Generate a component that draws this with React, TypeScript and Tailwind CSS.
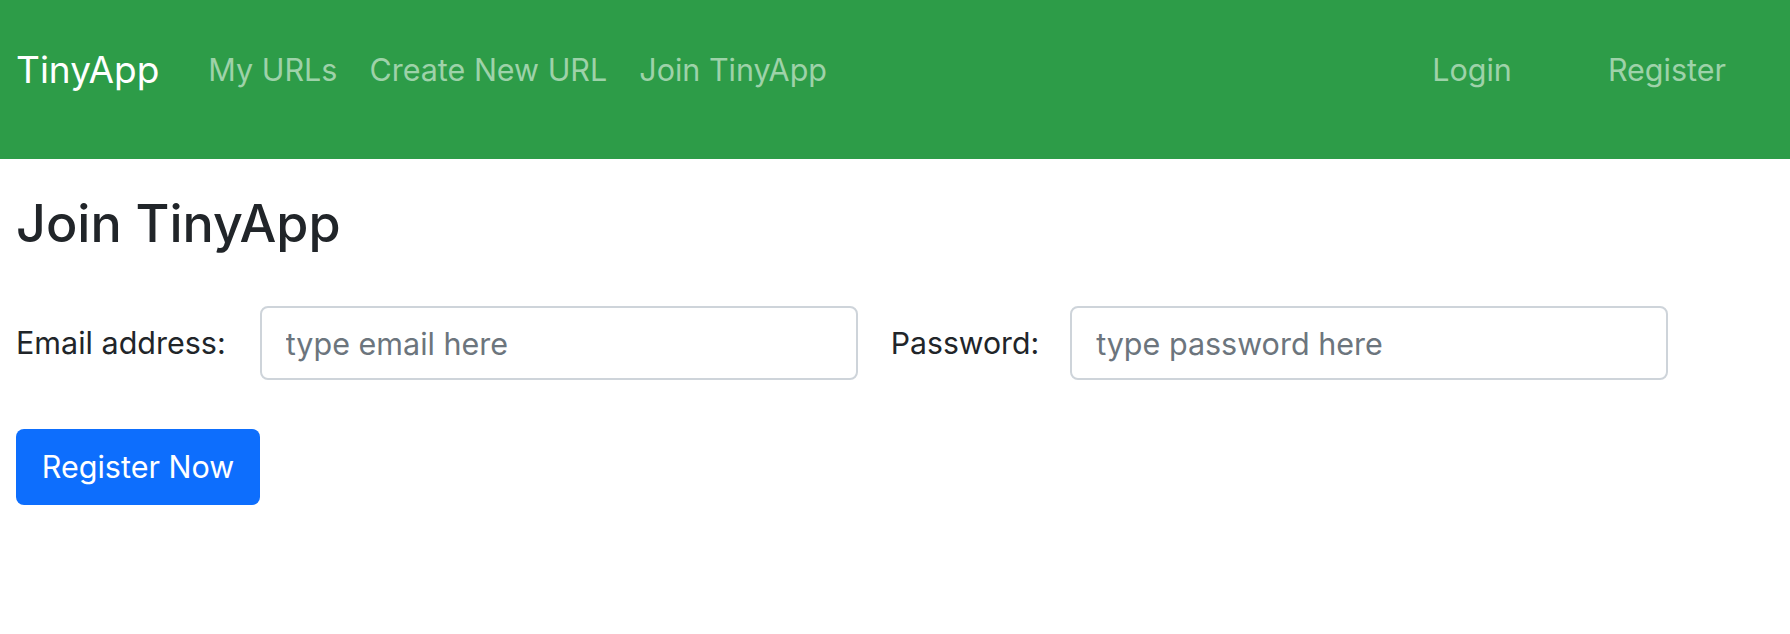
import React from 'react';

const navLinks = ['My URLs', 'Create New URL', 'Join TinyApp'];

export default function App() {
  return (
    <div className="min-h-screen bg-white text-[#212529] font-['Inter','Liberation_Sans',sans-serif]">
      {/* Navbar */}
      <nav className="h-[159px] bg-[#2d9c48] flex items-start pt-[46px] px-4">
        <a className="text-white text-[37px] leading-[48px] mr-[33px]">TinyApp</a>
        <div className="flex">
          {navLinks.map(link => (
            <a key={link} className="px-4 text-[30.5px] leading-[48px] text-[#9ed2a9]">
              {link}
            </a>
          ))}
        </div>
        <div className="ml-auto flex">
          <a className="px-12 text-[30.5px] leading-[48px] text-[#9ed2a9]">Login</a>
          <a className="px-12 text-[30.5px] leading-[48px] text-[#9ed2a9]">Register</a>
        </div>
      </nav>

      {/* Register form */}
      <main className="px-4">
        <h2 className="mt-[31px] text-[52px] leading-[68px] font-medium">Join TinyApp</h2>
        <form className="mt-[48px]">
          <div className="flex items-center">
            <label className="text-[30.5px] leading-[48px]">Email address:</label>
            <input
              type="email"
              placeholder="type email here"
              className="ml-[34px] w-[598px] h-[74px] px-[24px] text-[30.5px] border-2 border-[#ced4da] rounded-[8px] placeholder:text-[#6c757d] outline-none"
            />
            <label className="ml-[33px] text-[30.2px] leading-[48px]">Password:</label>
            <input
              type="password"
              placeholder="type password here"
              className="ml-[31px] w-[598px] h-[74px] px-[24px] text-[30.5px] border-2 border-[#ced4da] rounded-[8px] placeholder:text-[#6c757d] outline-none"
            />
          </div>
          <button
            type="submit"
            className="mt-[49px] w-[244px] h-[76px] bg-[#0d6efd] text-white text-[30.5px] rounded-[8px]"
          >
            Register Now
          </button>
        </form>
      </main>
    </div>
  );
}
